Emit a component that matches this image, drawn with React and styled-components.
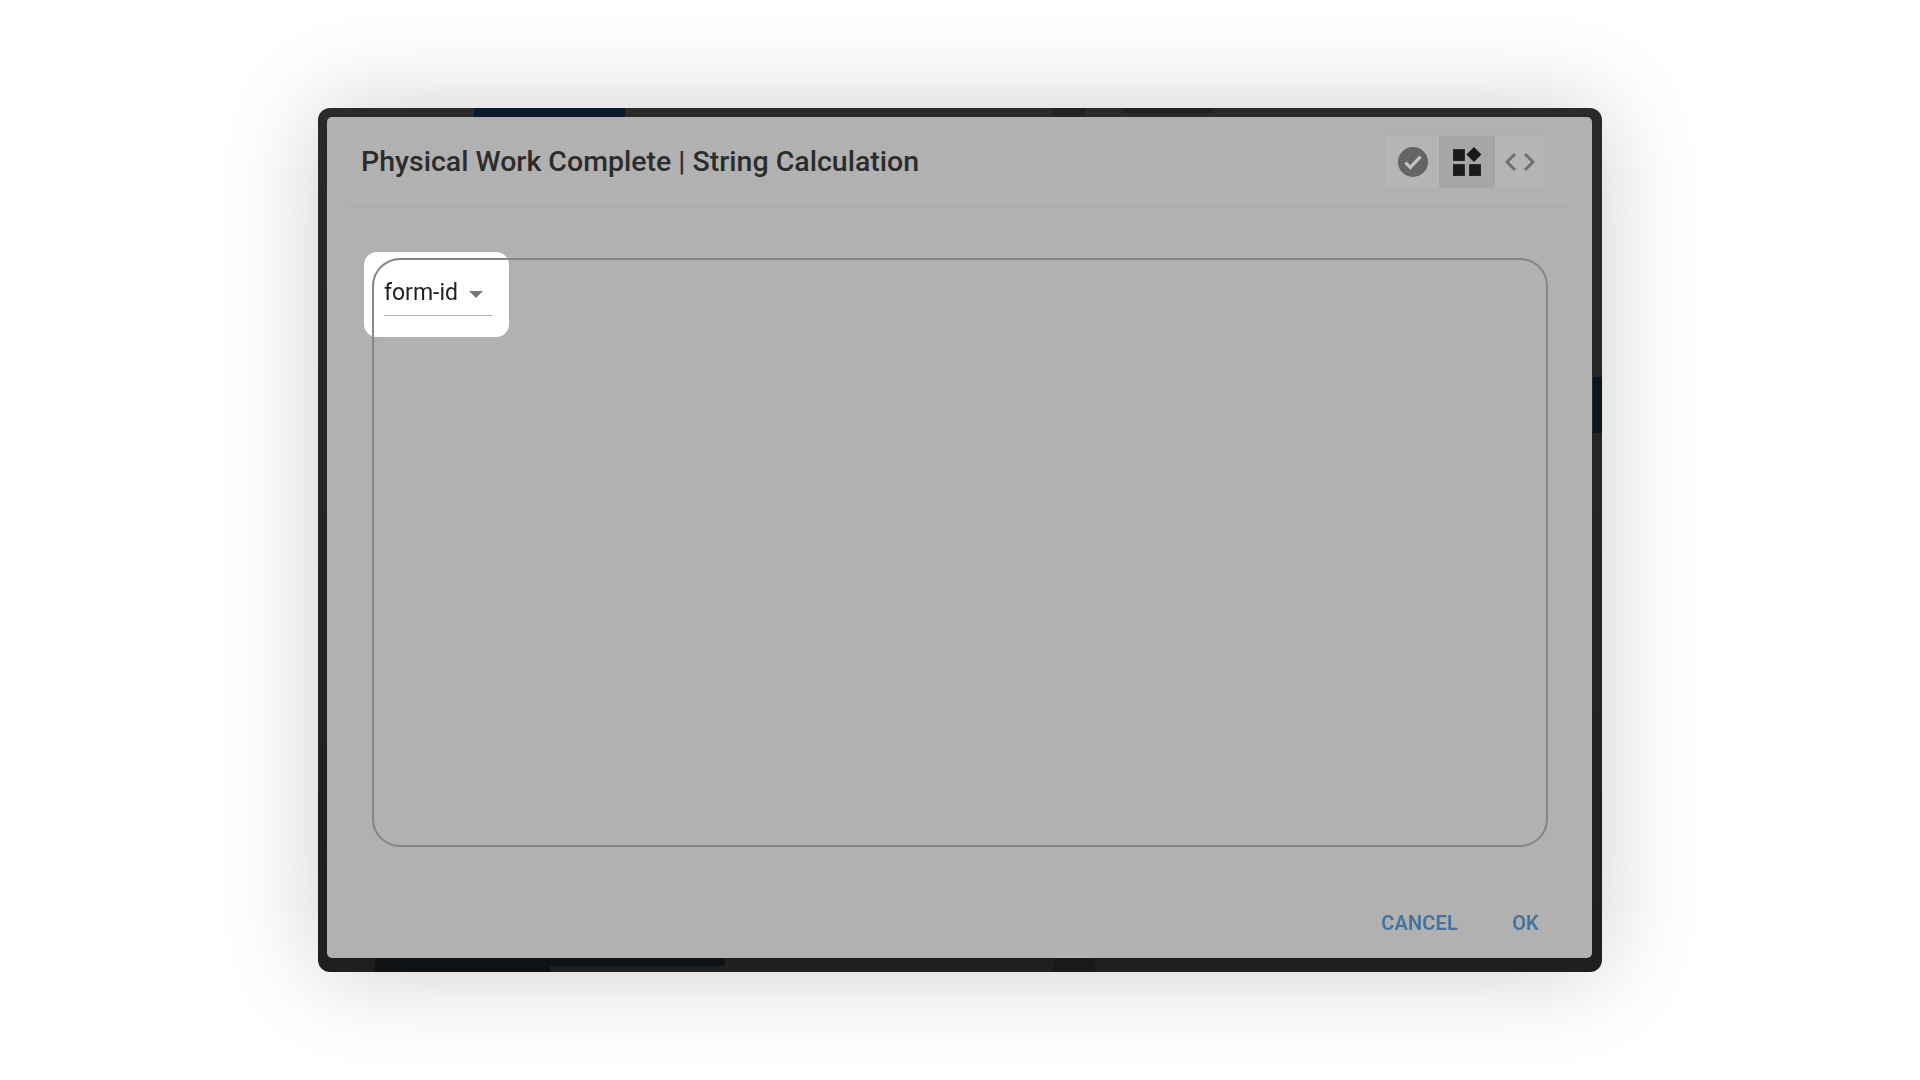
import React from "react"
import styled, { createGlobalStyle } from "styled-components"

const GlobalStyle = createGlobalStyle`
  html, body {
    margin: 0;
    padding: 0;
    background: #fff;
  }
  * {
    box-sizing: border-box;
  }
`

const Page = styled.div`
  width: 1920px;
  height: 1080px;
  display: flex;
  align-items: center;
  justify-content: center;
  overflow: hidden;
  background: #fff;
  font-family: Roboto, "Liberation Sans", sans-serif;
`

const Frame = styled.div`
  position: relative;
  width: 1284px;
  height: 864px;
  border-radius: 12px;
  background: linear-gradient(#2a2a2a, #1f1f1f);
  padding: 9px 10px 14px 9px;
  box-shadow: 0 0 100px rgba(0, 0, 0, 0.2);
`

// bits of the page behind the bezel that show along its edges
const EdgeStrip = styled.span`
  position: absolute;
  left: ${props => props.$left}px;
  top: ${props => props.$top}px;
  width: ${props => props.$width}px;
  height: ${props => props.$height}px;
  background: ${props => props.$color};
  filter: blur(0.6px);
`

const Dialog = styled.div`
  position: relative;
  width: 100%;
  height: 100%;
  display: flex;
  flex-direction: column;
  border-radius: 5px;
  background: #b1b1b1;
  filter: blur(0.6px);
`

const Header = styled.div`
  height: 90px;
  margin: 0 23px 0 21px;
  padding: 0 0 0 13px;
  display: flex;
  align-items: center;
  justify-content: space-between;
  border-bottom: 1px solid #a8a8a8;
`

const Title = styled.h2`
  margin: 0;
  font-size: 28.5px;
  font-weight: 500;
  color: #2c2c2c;
`

const Toolbar = styled.div`
  display: flex;
  height: 54px;
  margin-right: 23px;
  border: 1px solid #adadad;
  background: #b5b5b5;
`

const ToolButton = styled.div`
  width: ${props => props.width}px;
  display: flex;
  align-items: center;
  justify-content: center;
  background: ${props => (props.active ? "#a6a6a6" : "transparent")};
`

const Body = styled.div`
  padding: 51px 44px 0 45px;
`

const Canvas = styled.div`
  height: 589px;
  border: 2px solid #858585;
  border-radius: 28px;
`

const Footer = styled.div`
  flex: 1;
  display: flex;
  align-items: center;
  justify-content: flex-end;
  gap: 54px;
  padding: 40px 53px 0 0;
`

const ActionText = styled.span`
  font-size: 20px;
  font-weight: 600;
  letter-spacing: 0.2px;
  color: #43739f;
`

const Spotlight = styled.div`
  position: absolute;
  left: 46px;
  top: 144px;
  width: 145px;
  height: 85px;
  border-radius: 13px;
  background: #fff;
  overflow: hidden;
  filter: blur(0.4px);
`

const SpotCorner = styled.div`
  position: absolute;
  left: 8px;
  top: 6px;
  width: 170px;
  height: 110px;
  border: 2px solid #858585;
  border-radius: 28px 0 0 0;
  border-right: none;
  border-bottom: none;
`

const FormSelect = styled.div`
  position: absolute;
  left: 20px;
  top: 20px;
  width: 108px;
  height: 44px;
  padding-bottom: 3px;
  display: flex;
  align-items: center;
  gap: 11px;
  border-bottom: 1px solid #b0b0b0;
`

const SelectText = styled.span`
  font-size: 23px;
  color: #222;
`

const SelectArrow = styled.span`
  width: 0;
  height: 0;
  margin-top: 4px;
  border-left: 7px solid transparent;
  border-right: 7px solid transparent;
  border-top: 7px solid #777;
`

const CheckIcon = () => (
  <svg width="30" height="30" viewBox="0 0 28 28">
    <circle cx="14" cy="14" r="14" fill="#646464" />
    <path d="M7 14.5l4.5 4.5 9.5-10" fill="none" stroke="#c4c4c4" strokeWidth="3" />
  </svg>
)

const WidgetsIcon = () => (
  <svg width="30" height="30" viewBox="0 0 28 28" fill="#1a1a1a">
    <rect x="1" y="2" width="11" height="11" />
    <rect x="1" y="16" width="11" height="11" />
    <rect x="16" y="16" width="11" height="11" />
    <path d="M20.5 0l7 7-7 7-7-7z" />
  </svg>
)

const CodeIcon = () => (
  <svg width="30" height="28" viewBox="0 0 30 28" fill="none" stroke="#6e6e6e" strokeWidth="3">
    <path d="M10 6l-8 8 8 8" />
    <path d="M20 6l8 8-8 8" />
  </svg>
)

const edgeStrips = [
  { left: 156, top: 0, width: 151, height: 9, color: "#0a1a30" },
  { left: 735, top: 0, width: 33, height: 9, color: "#232323" },
  { left: 805, top: 0, width: 90, height: 5, color: "#222" },
  { left: 1275, top: 269, width: 9, height: 56, color: "#0b1620" },
  { left: 57, top: 850, width: 175, height: 14, color: "#0e1215" },
  { left: 232, top: 850, width: 175, height: 8, color: "#0e1215" },
  { left: 735, top: 850, width: 42, height: 14, color: "#1a1a1a" },
]

const App = () => {
  return (
    <Page>
      <GlobalStyle />
      <Frame>
        {edgeStrips.map(strip => (
          <EdgeStrip
            key={`${strip.left}-${strip.top}`}
            $left={strip.left}
            $top={strip.top}
            $width={strip.width}
            $height={strip.height}
            $color={strip.color}
          />
        ))}
        <Dialog>
          <Header>
            <Title>Physical Work Complete | String Calculation</Title>
            <Toolbar>
              <ToolButton width={53}>
                <CheckIcon />
              </ToolButton>
              <ToolButton width={56} active>
                <WidgetsIcon />
              </ToolButton>
              <ToolButton width={50}>
                <CodeIcon />
              </ToolButton>
            </Toolbar>
          </Header>
          <Body>
            <Canvas />
          </Body>
          <Footer>
            <ActionText>CANCEL</ActionText>
            <ActionText>OK</ActionText>
          </Footer>
        </Dialog>
        <Spotlight>
          <SpotCorner />
          <FormSelect>
            <SelectText>form-id</SelectText>
            <SelectArrow />
          </FormSelect>
        </Spotlight>
      </Frame>
    </Page>
  )
}

export default App
